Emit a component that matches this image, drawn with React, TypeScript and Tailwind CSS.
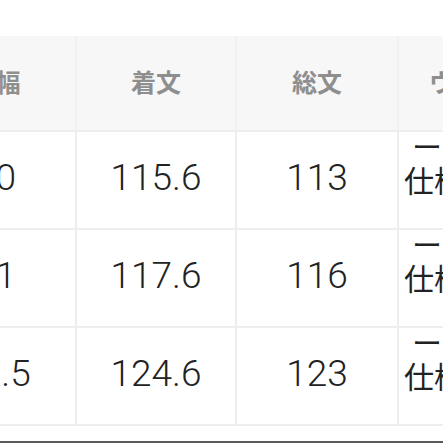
const digitFont = { fontFamily: 'Roboto, "Noto Sans CJK JP", sans-serif' };

const headers = ["肩幅", "着文", "総文", "ウエスト"];

const rows = [
  ["60", "115.6", "113"],
  ["61", "117.6", "116"],
  ["62.5", "124.6", "123"],
];

const widths = ["w-[159px]", "w-[158px]", "w-[160px]", "w-[160px]"];

export default function App() {
  return (
    <div
      className="flex h-[443px] w-[443px] flex-col overflow-hidden bg-white"
      style={{ fontFamily: '"Noto Sans CJK JP", sans-serif' }}
    >
      <div className="h-[36px] shrink-0" />
      <div className="-ml-[84px] flex w-max flex-col gap-[2px] bg-[#eeeeee] pb-[2px]">
        <div className="flex gap-[2px] bg-[#f1f1f1]">
          {headers.map((h, i) => (
            <div
              key={h}
              className={`${widths[i]} flex h-[94px] items-center justify-center bg-[#f7f7f7] pb-[2px] text-[25px] font-bold text-[#8e8e8e]`}
            >
              {h}
            </div>
          ))}
        </div>
        {rows.map((r) => (
          <div key={r[1]} className="flex gap-[2px]">
            {r.map((v, i) => (
              <div
                key={i}
                className={`${widths[i]} flex h-[96px] items-center justify-center bg-white pb-[4px] text-[37px] font-light text-[#222222]`}
                style={digitFont}
              >
                {v}
              </div>
            ))}
            <div className="flex h-[96px] w-[160px] flex-col bg-white pl-[5px] text-[30px] text-[#222222]">
              <span className="block pl-[8px] leading-[26px]">ー</span>
              <span className="block leading-[42px]">仕様により</span>
            </div>
          </div>
        ))}
      </div>
      <div className="flex-1" />
      <div className="h-[2px] shrink-0 bg-[#5a5a5a]" />
    </div>
  );
}
